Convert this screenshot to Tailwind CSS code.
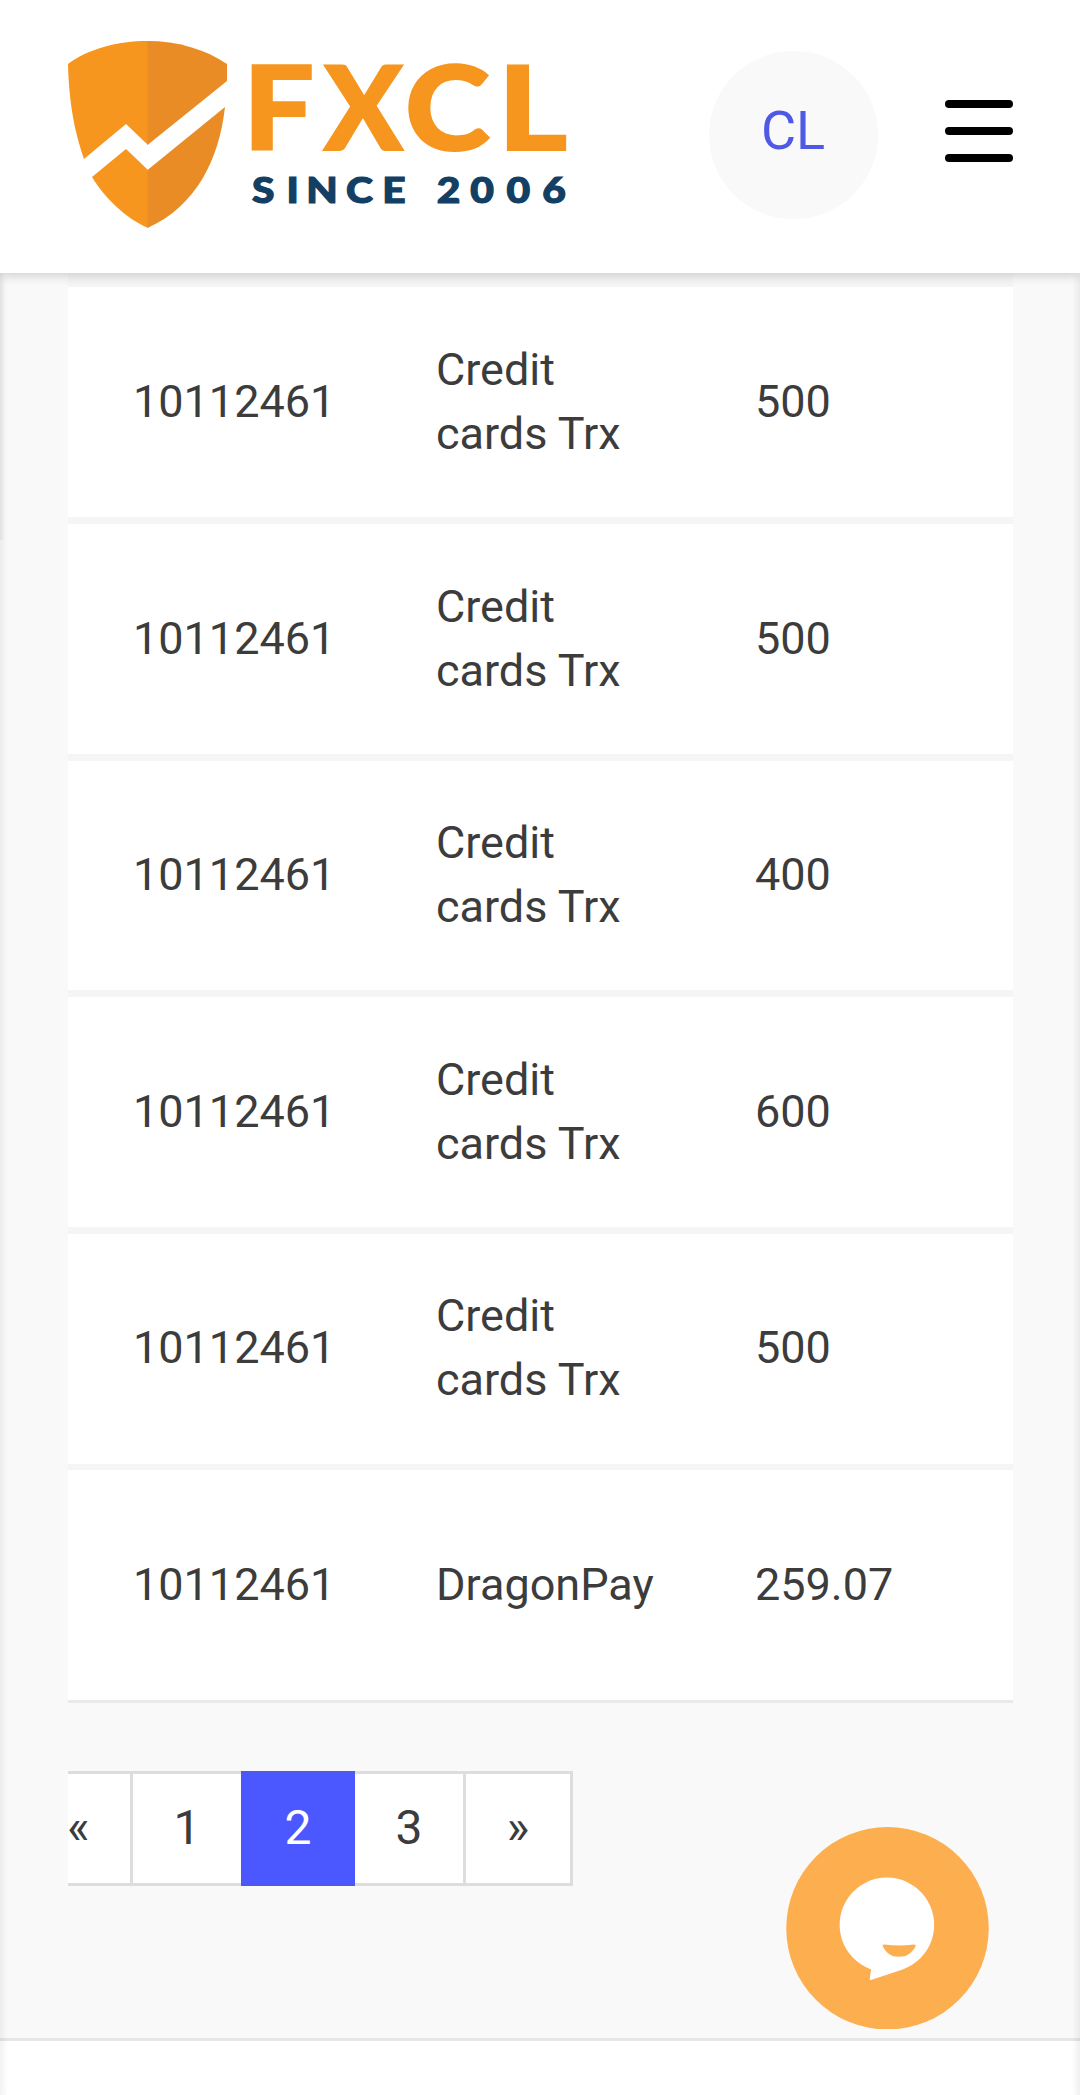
<!DOCTYPE html>
<html lang="en">
  <head>
    <meta charset="UTF-8" />
    <meta name="viewport" content="width=device-width, initial-scale=1.0" />
    <title>FXCL - Transactions</title>
    <script src="https://cdn.jsdelivr.net/npm/@tailwindcss/browser@4"></script>
  </head>
  <body class="relative flex h-[2095px] flex-col overflow-hidden bg-[#f9f9f9] font-[Roboto,sans-serif] text-[45px] leading-[64px] text-[#3c3c3c]">
    <header class="relative z-10 flex h-[273px] shrink-0 items-start bg-white pl-[68px] pr-[67px] shadow-[0_3px_10px_rgba(0,0,0,0.16)]">
      <a href="#" class="mt-10 block">
        <svg class="h-[190px] w-[502px] overflow-visible" viewBox="68 40 502 190">
          <!-- shield -->
          <path fill="#f6961f" d="M68 64C88 49 117 41 148 41V145L126 124L84 159C75 132 69 105 68 64Z" />
          <path fill="#e98c25" d="M147.500 41C177 41 205 49 227 64V81L147.500 145Z" />
          <path fill="#f6961f" d="M92 177L126 149L148 170V228C125 218 104 197 92 177Z" />
          <path fill="#e98c25" d="M147.500 170L225 107C219 160 196 206 147.500 228Z" />
          <g class="fill-[#f6961f] stroke-[#f6961f] font-[Lato,sans-serif] text-[116px] font-black" stroke-width="2">
            <text transform="translate(243.300 149.700) scale(1.08 1)">F</text>
            <text transform="translate(324 149.700)">X</text>
            <text transform="translate(405 149.700) scale(1.11 1)">C</text>
            <text transform="translate(498 149.700) scale(1.14 1)">L</text>
          </g>
          <text transform="translate(0 202.800) scale(1.1 1)" x="229 260.500 278.500 314.500 347.500 370.500 397 427.500 460.500 493" class="fill-[#123f63] stroke-[#123f63] font-[Lato,sans-serif] text-[37px] font-black" stroke-width="1.200">SINCE 2006</text>
        </svg>
      </a>
      <div class="ml-auto mt-[51px] flex h-[168px] w-[169px] items-center justify-center rounded-full bg-[#f9f9fa] pb-[9px] pr-px text-[54px] text-[#4f59e6]">CL</div>
      <button class="ml-[67px] mt-[100.4px] flex w-[68px] flex-col gap-[19.5px]" aria-label="Menu">
        <span class="h-[7.5px] rounded-full bg-black"></span>
        <span class="h-[7.5px] rounded-full bg-black"></span>
        <span class="h-[7.5px] rounded-full bg-black"></span>
      </button>
    </header>

    <main class="flex h-[1765px] shrink-0 flex-col pl-[68px] pr-[67px]">
      <div class="border-b-3 border-[#eaeaea] bg-white">
        <div class="h-[14px] bg-[#f5f5f5]"></div>
        <div class="flex h-[237px] items-center border-b-7 border-[#f5f5f5] pl-[65px]">
          <div class="w-[303px]">10112461</div>
          <div class="w-[319px]">Credit<br />cards Trx</div>
          <div>500</div>
        </div>
        <div class="flex h-[237px] items-center border-b-7 border-[#f5f5f5] pl-[65px]">
          <div class="w-[303px]">10112461</div>
          <div class="w-[319px]">Credit<br />cards Trx</div>
          <div>500</div>
        </div>
        <div class="flex h-[236px] items-center border-b-7 border-[#f5f5f5] pb-px pl-[65px]">
          <div class="w-[303px]">10112461</div>
          <div class="w-[319px]">Credit<br />cards Trx</div>
          <div>400</div>
        </div>
        <div class="flex h-[237px] items-center border-b-7 border-[#f5f5f5] pl-[65px]">
          <div class="w-[303px]">10112461</div>
          <div class="w-[319px]">Credit<br />cards Trx</div>
          <div>600</div>
        </div>
        <div class="flex h-[236px] items-center border-b-6 border-[#f5f5f5] pb-[2px] pl-[65px]">
          <div class="w-[303px]">10112461</div>
          <div class="w-[319px]">Credit<br />cards Trx</div>
          <div>500</div>
        </div>
        <div class="flex h-[230px] items-center pl-[65px]">
          <div class="w-[303px]">10112461</div>
          <div class="w-[319px]">DragonPay</div>
          <div>259.07</div>
        </div>
      </div>

      <!-- pagination -->
      <nav class="mt-[68px] flex h-[115px] w-[505px] text-[48px] leading-[107px]">
        <a href="#" class="w-[65px] border-y-3 border-r-3 border-[#dddddd] bg-white"><span class="-ml-px">«</span></a>
        <a href="#" class="w-[108px] border-y-3 border-[#dddddd] bg-white text-center">1</a>
        <a href="#" class="w-[114px] border-y-3 border-[#4c59ee] bg-[#4b58ff] text-center text-white">2</a>
        <a href="#" class="w-[111px] border-y-3 border-r-3 border-[#dddddd] bg-white text-center">3</a>
        <a href="#" class="w-[107px] border-y-3 border-r-3 border-[#dddddd] bg-white text-center">»</a>
      </nav>
    </main>

    <footer class="h-[57px] shrink-0 border-t-3 border-[#e6e6e6] bg-white"></footer>

    <!-- page edge shadows -->
    <div class="absolute left-0 top-[273px] h-[267px] w-[5px] bg-linear-to-r from-black/5 to-transparent"></div>
    <div class="absolute left-0 top-[273px] h-[1822px] w-2 bg-linear-to-r from-black/5 to-transparent"></div>
    <div class="absolute right-0 top-[273px] h-[1822px] w-2 bg-linear-to-l from-black/6 to-transparent"></div>

    <!-- chat widget -->
    <button class="absolute left-[786px] top-[1826.5px] h-[202.5px] w-[203px]" aria-label="Chat">
      <svg class="size-full" viewBox="0 0 203 203">
        <circle cx="101.500" cy="101.500" r="101.500" fill="#fdaf4f" />
        <path fill="#fff" d="M85.700 142.800A47.400 47.400 0 1 1 117.300 142.800L85.500 153.300Q84 153.600 84.300 152Z" transform="translate(-0.600 0)" />
        <path fill="#fdaf4f" d="M98.500 117.700Q113 119.800 128 117.700Q130.500 117.700 129.500 120C125 127 121 130 113 130C105 130 101 127 97 120Q96 117.400 98.500 117.700Z" />
      </svg>
    </button>
  </body>
</html>
